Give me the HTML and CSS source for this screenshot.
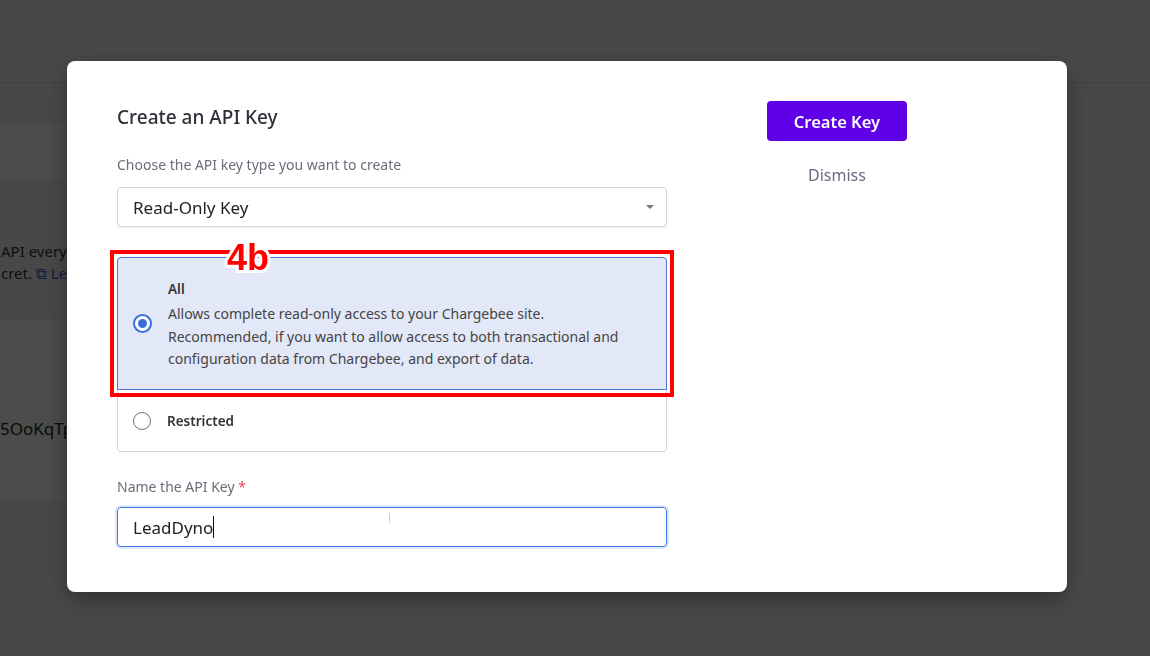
FILE: index.html
```html
<!DOCTYPE html>
<html lang="en">
<head>
    <meta charset="UTF-8">
    <meta name="viewport" content="width=device-width, initial-scale=1.0">
    <title>Chargebee - API Keys</title>
    <link rel="stylesheet" href="styles.css">
</head>
<body>

    <div class="page">
        <div class="page-header"></div>
        <div class="page-main">
            <div class="page-card page-card-short"></div>
            <div class="page-text">
                <p>API every time you make a request, keep it a</p>
                <p>cret. <span class="ext-icon">&#x29C9;</span> <a href="#">Learn more</a></p>
            </div>
            <div class="page-card page-card-tall">
                <span class="key-value">5OoKqTp</span>
            </div>
        </div>
    </div>

    <div class="overlay">
        <div class="modal">
            <div class="modal-form">
                <h2 class="modal-title">Create an API Key</h2>

                <label class="field-label">Choose the API key type you want to create</label>
                <div class="select-box">
                    <span>Read-Only Key</span>
                    <span class="select-caret"></span>
                </div>

                <div class="radio-group">
                    <div class="radio-option selected">
                        <span class="radio checked"></span>
                        <div class="radio-text">
                            <div class="radio-title">All</div>
                            <div class="radio-desc">Allows complete read-only access to your Chargebee site.<br>Recommended, if you want to allow access to both transactional and configuration data from Chargebee, and export of data.</div>
                        </div>
                        <div class="annotation">
                            <span class="annotation-tag">4b</span>
                        </div>
                    </div>
                    <div class="radio-option">
                        <span class="radio"></span>
                        <div class="radio-text">
                            <div class="radio-title">Restricted</div>
                        </div>
                    </div>
                </div>

                <label class="field-label name-label">Name the API Key <span class="required">*</span></label>
                <div class="text-input">
                    <span>LeadDyno</span><span class="text-caret"></span>
                    <span class="mouse-cursor"></span>
                </div>
            </div>

            <div class="modal-actions">
                <button class="create-btn">Create Key</button>
                <a href="#" class="dismiss-link">Dismiss</a>
            </div>
        </div>
    </div>

</body>
</html>
```

FILE: styles.css
```css
body {
    font-family: 'Noto Sans', 'Open Sans', sans-serif;
    background-color: #f2f2f5;
    color: #333;
    margin: 0;
    padding: 0;
    overflow: hidden;
    height: 656px;
}

/* background page behind the modal */
.page-header {
    height: 82px;
    border-bottom: 1px solid #d6d6dc;
    background-color: #f2f2f5;
}

.page-main {
    padding-top: 40px;
}

.page-card {
    background-color: #fff;
    width: 980px;
}

.page-card-short {
    height: 57px;
}

.page-text {
    margin-top: 60px;
    padding-left: 1px;
    font-size: 15px;
    line-height: 22px;
    color: #333;
}

.page-text p {
    margin: 0;
}

.page-text a {
    color: #3a5bd9;
    text-decoration: none;
}

.ext-icon {
    color: #3a5bd9;
}

.page-card-tall {
    margin-top: 34px;
    height: 182px;
    display: flex;
    align-items: center;
    border-top: 1px solid #e0e0e6;
}

.key-value {
    font-size: 17px;
    color: #222;
    margin-top: 36px;
}

/* modal */
.overlay {
    position: fixed;
    inset: 0;
    background-color: rgba(0, 0, 0, 0.7);
    padding: 61px 0 0 67px;
}

.modal {
    width: 1000px;
    box-sizing: border-box;
    background-color: #fff;
    border-radius: 8px;
    padding: 40px 50px 45px 50px;
    display: flex;
    gap: 100px;
    box-shadow: 0 8px 24px rgba(0, 0, 0, 0.35);
}

.modal-form {
    width: 550px;
    display: flex;
    flex-direction: column;
}

.modal-title {
    margin: 0;
    font-size: 19px;
    font-weight: 500;
    line-height: 32px;
    color: #2f2f3a;
}

.field-label {
    margin-top: 22px;
    font-size: 14px;
    line-height: 20px;
    color: #6c6c7c;
}

.name-label {
    margin-top: 25px;
}

.required {
    color: #e5484d;
}

.select-box {
    margin-top: 12px;
    height: 40px;
    box-sizing: border-box;
    border: 1px solid #d3d3da;
    border-radius: 4px;
    padding: 0 15px;
    display: flex;
    align-items: center;
    justify-content: space-between;
    font-size: 17px;
    color: #222;
    box-shadow: 0 1px 2px rgba(0, 0, 0, 0.05);
}

.select-caret {
    width: 0;
    height: 0;
    border-left: 4px solid transparent;
    border-right: 4px solid transparent;
    border-top: 4px solid #777;
    margin-right: -3px;
}

.radio-group {
    margin-top: 30px;
    border: 1px solid #d3d3da;
    border-radius: 4px;
}

.radio-option {
    position: relative;
    display: flex;
    align-items: center;
    padding: 0 0 0 15px;
    height: 61px;
}

.radio-option.selected {
    height: 133px;
    box-sizing: border-box;
    padding-top: 3px;
    margin: -1px -1px 0 -1px;
    border: 1px solid #4a78d8;
    border-radius: 4px 4px 0 0;
    background-color: #e2e8f7;
}

.radio-option.selected .radio {
    margin-top: -3px;
}

.radio {
    width: 16px;
    height: 16px;
    border: 1.5px solid #6e6e78;
    border-radius: 50%;
    flex-shrink: 0;
    position: relative;
    margin-right: 16px;
    background-color: #fff;
}

.radio.checked {
    border: 2px solid #3a6fd8;
    width: 15px;
    height: 15px;
}

.radio.checked::after {
    content: '';
    position: absolute;
    top: 3px;
    left: 3px;
    width: 9px;
    height: 9px;
    border-radius: 50%;
    background-color: #3a6fd8;
}

.radio-title {
    font-size: 13.5px;
    font-weight: 600;
    line-height: 20px;
    color: #333;
}

.radio-desc {
    margin-top: 4px;
    font-size: 14px;
    line-height: 22.5px;
    color: #444;
    padding-right: 20px;
}

/* screenshot annotation */
.annotation {
    position: absolute;
    top: -8px;
    left: -8px;
    right: -8px;
    bottom: -8px;
    border: 4px solid #ff0000;
    pointer-events: none;
}

.annotation-tag {
    position: absolute;
    top: -14px;
    left: 113px;
    font-family: 'Liberation Sans', Arial, sans-serif;
    font-weight: bold;
    font-size: 36px;
    line-height: 36px;
    color: #ff0000;
    -webkit-text-stroke: 6px #fff;
    paint-order: stroke fill;
}

.text-input {
    position: relative;
    margin-top: 10px;
    height: 40px;
    box-sizing: border-box;
    border: 1px solid #3d78e0;
    border-radius: 4px;
    padding: 0 15px;
    display: flex;
    align-items: center;
    font-size: 17px;
    color: #222;
    box-shadow: 0 0 0 2px rgba(61, 120, 224, 0.18);
}

.text-caret {
    display: inline-block;
    width: 1px;
    height: 22px;
    background-color: #111;
}

.mouse-cursor {
    position: absolute;
    left: 271px;
    top: 5px;
    width: 1px;
    height: 10px;
    background-color: #ccc;
}

.modal-actions {
    width: 140px;
    display: flex;
    flex-direction: column;
    align-items: center;
}

.create-btn {
    width: 140px;
    height: 40px;
    border: none;
    border-radius: 4px;
    background-color: #5f00e6;
    color: #fff;
    font-family: inherit;
    font-size: 16.5px;
    font-weight: 600;
    cursor: pointer;
}

.dismiss-link {
    margin-top: 24px;
    font-size: 16px;
    line-height: 20px;
    color: #6c6c80;
    text-decoration: none;
}
```
